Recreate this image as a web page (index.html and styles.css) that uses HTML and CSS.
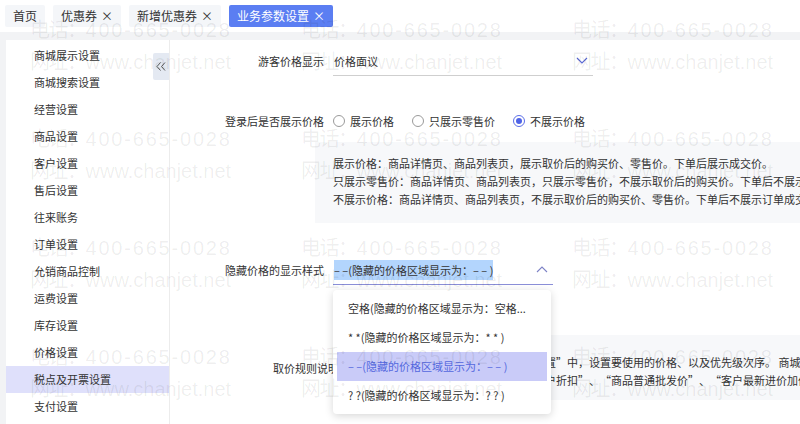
FILE: index.html
```html
<!DOCTYPE html>
<html lang="zh-CN">
<head>
<meta charset="utf-8">
<title>业务参数设置</title>
<link rel="stylesheet" href="styles.css">
</head>
<body>
<div class="app">
  <nav class="tabs">
    <span class="tab">首页</span>
    <span class="tab">优惠券<span class="x">×</span></span>
    <span class="tab">新增优惠券<span class="x">×</span></span>
    <span class="tab active">业务参数设置<span class="x">×</span></span>
  </nav>
  <div class="frame">
    <aside class="sidebar">
      <ul class="menu">
        <li>商城展示设置</li>
        <li>商城搜索设置</li>
        <li>经营设置</li>
        <li>商品设置</li>
        <li>客户设置</li>
        <li>售后设置</li>
        <li>往来账务</li>
        <li>订单设置</li>
        <li>允销商品控制</li>
        <li>运费设置</li>
        <li>库存设置</li>
        <li>价格设置</li>
        <li class="current">税点及开票设置</li>
        <li>支付设置</li>
      </ul>
      <button class="collapse" type="button" aria-label="收起">
        <svg width="10" height="9" viewBox="0 0 10 9"><polyline points="4.5,0.5 1,4.5 4.5,8.5" fill="none" stroke="#555" stroke-width="1"/><polyline points="9,0.5 5.5,4.5 9,8.5" fill="none" stroke="#555" stroke-width="1"/></svg>
      </button>
    </aside>
    <main class="content">
      <div class="row row-guest">
        <span class="label">游客价格显示</span>
        <div class="select select-wide">
          <span class="value">价格面议</span>
          <svg class="chev" width="12" height="7" viewBox="0 0 12 7"><polyline points="1,1 6,6 11,1" fill="none" stroke="#5a68d4" stroke-width="1.1"/></svg>
        </div>
      </div>
      <div class="row row-login">
        <span class="label">登录后是否展示价格</span>
        <div class="radios">
          <span class="radio"><i class="dot"></i>展示价格</span>
          <span class="radio"><i class="dot"></i>只展示零售价</span>
          <span class="radio checked"><i class="dot"></i>不展示价格</span>
        </div>
      </div>
      <div class="info">
        <p>展示价格：商品详情页、商品列表页，展示取价后的购买价、零售价。下单后展示成交价。</p>
        <p>只展示零售价：商品详情页、商品列表页，只展示零售价，不展示取价后的购买价。下单后不展示订单成交价。</p>
        <p>不展示价格：商品详情页、商品列表页，不展示取价后的购买价、零售价。下单后不展示订单成交价。</p>
      </div>
      <div class="row row-style">
        <span class="label">隐藏价格的显示样式</span>
        <div class="select select-focus">
          <span class="value"><span class="sel">– –(隐藏的价格区域显示为：– – )</span></span>
          <svg class="chev" width="12" height="7" viewBox="0 0 12 7"><polyline points="1,6 6,1 11,6" fill="none" stroke="#7d83c6" stroke-width="1.1"/></svg>
          <ul class="dropdown">
            <li>空格(隐藏的价格区域显示为：空格...</li>
            <li>* *(隐藏的价格区域显示为：* * )</li>
            <li class="hover">– –(隐藏的价格区域显示为：– – )</li>
            <li>? ?(隐藏的价格区域显示为：? ? )</li>
          </ul>
        </div>
      </div>
      <div class="rule">
        <span class="rule-label">取价规则说明</span>
        <div class="rule-box">
          <p>商城取价规则在“商城设置－价格设置”中，设置要使用的价格、以及优先级次序。 商城中使用的价格包括“商品零售价”</p>
          <p>可选价格有：“商品零售价”、“客户折扣”、“商品普通批发价”、“客户最新进价加价”7种价格方式</p>
        </div>
      </div>
    </main>
  </div>
  <div class="watermark" aria-hidden="true">
    <div class="wm"><p>电话：<span class="num">400-665-0028</span></p><p>网址：<span class="url">www.chanjet.net</span></p></div>
    <div class="wm"><p>电话：<span class="num">400-665-0028</span></p><p>网址：<span class="url">www.chanjet.net</span></p></div>
    <div class="wm"><p>电话：<span class="num">400-665-0028</span></p><p>网址：<span class="url">www.chanjet.net</span></p></div>
    <div class="wm"><p>电话：<span class="num">400-665-0028</span></p><p>网址：<span class="url">www.chanjet.net</span></p></div>
    <div class="wm"><p>电话：<span class="num">400-665-0028</span></p><p>网址：<span class="url">www.chanjet.net</span></p></div>
    <div class="wm"><p>电话：<span class="num">400-665-0028</span></p><p>网址：<span class="url">www.chanjet.net</span></p></div>
    <div class="wm"><p>电话：<span class="num">400-665-0028</span></p><p>网址：<span class="url">www.chanjet.net</span></p></div>
    <div class="wm"><p>电话：<span class="num">400-665-0028</span></p><p>网址：<span class="url">www.chanjet.net</span></p></div>
    <div class="wm"><p>电话：<span class="num">400-665-0028</span></p><p>网址：<span class="url">www.chanjet.net</span></p></div>
    <div class="wm"><p>电话：<span class="num">400-665-0028</span></p><p>网址：<span class="url">www.chanjet.net</span></p></div>
    <div class="wm"><p>电话：<span class="num">400-665-0028</span></p><p>网址：<span class="url">www.chanjet.net</span></p></div>
    <div class="wm"><p>电话：<span class="num">400-665-0028</span></p><p>网址：<span class="url">www.chanjet.net</span></p></div>
  </div>
</div>
</body>
</html>
```
FILE: styles.css
```css
html, body {
  margin: 0;
  padding: 0;
  overflow: hidden;
  background: #fff;
}
body {
  font-family: "Noto Sans CJK SC", "Noto Sans", sans-serif;
  color: #333;
  font-size: 11px;
  text-spacing-trim: space-all;
}
p, ul { margin: 0; padding: 0; }
ul { list-style: none; }

.app {
  position: relative;
  width: 800px;
  height: 424px;
  overflow: hidden;
}

/* tabs */
.tabs {
  height: 32px;
  box-sizing: border-box;
  display: flex;
  align-items: flex-start;
  gap: 8px;
  padding: 5px 0 0 5px;
  background: #fff;
}
.tab {
  height: 22px;
  line-height: 22px;
  padding: 0 8px;
  font-size: 12px;
  background: #f4f6f9;
  color: #333;
  border-radius: 2px;
  white-space: nowrap;
}
.tab .x {
  margin-left: 4px;
  font-size: 12px;
}
.tab.active {
  background: #5b7ef2;
  color: #fff;
}

/* frame */
.frame {
  display: flex;
  height: 392px;
  box-sizing: border-box;
  padding: 8px 0 0 6px;
  background: #f2f3f5;
}
.sidebar {
  position: relative;
  width: 163px;
  flex: none;
  background: #fff;
  border-right: 1px solid #ececec;
}
.menu {
  padding-top: 2px;
}
.menu li {
  height: 27px;
  line-height: 27px;
  padding-left: 28px;
  white-space: nowrap;
}
.menu li.current {
  background: #dfe0fb;
}
.collapse {
  position: absolute;
  right: 0;
  top: 13px;
  width: 16px;
  height: 27px;
  padding: 0;
  border: 0;
  border-radius: 2px 0 0 2px;
  background: #e4e9f2;
  display: flex;
  align-items: center;
  justify-content: center;
}

/* content */
.content {
  flex: 1;
  min-width: 0;
  background: #fff;
  padding-top: 6px;
  overflow: hidden;
}
.row {
  display: grid;
  grid-template-columns: 154px auto;
  column-gap: 9px;
  align-items: center;
  justify-content: start;
}
.label {
  text-align: right;
  white-space: nowrap;
}
.select {
  position: relative;
  height: 30px;
  box-sizing: border-box;
  border-bottom: 1px solid #cfcfcf;
  display: flex;
  align-items: center;
  justify-content: space-between;
  padding: 0 5px 0 1px;
}
.select-wide { width: 260px; }
.select-focus {
  width: 220px;
  border-bottom-color: #8b8fd8;
}
.chev { display: block; }
.sel {
  background: #b3d5fd;
  padding: 2px 0;
}

.row-login {
  margin-top: 35px;
  height: 20px;
}
.radios {
  display: flex;
  gap: 18px;
}
.radio {
  display: flex;
  align-items: center;
  gap: 5px;
  white-space: nowrap;
}
.dot {
  width: 12px;
  height: 12px;
  box-sizing: border-box;
  border: 1px solid #9a9a9a;
  border-radius: 50%;
  background: #fff;
  position: relative;
}
.radio.checked .dot {
  border-color: #5b6ee8;
}
.radio.checked .dot::after {
  content: "";
  position: absolute;
  left: 2px;
  top: 2px;
  width: 6px;
  height: 6px;
  border-radius: 50%;
  background: #4f63e6;
}

.info {
  margin: 11px 0 0 145px;
  padding: 12px 18px 15px;
  background: #f7f8fa;
  line-height: 18px;
  white-space: nowrap;
}

.row-style { margin-top: 32px; }
.dropdown {
  position: absolute;
  top: 35px;
  left: 0;
  width: 218px;
  box-sizing: border-box;
  padding: 4px 4px;
  background: #fff;
  border-radius: 4px;
  box-shadow: 0 2px 9px rgba(0, 0, 0, 0.16);
  z-index: 2;
}
.dropdown li {
  height: 29px;
  line-height: 29px;
  padding-left: 11px;
  white-space: nowrap;
  color: #333;
}
.dropdown li.hover {
  background: #c9cbf8;
  color: #5468de;
}

.rule {
  margin-top: 50px;
  display: flex;
  align-items: center;
  padding-left: 103px;
}
.rule-label { white-space: nowrap; flex: none; }
.rule-box {
  flex: none;
  margin-left: 12px;
  padding: 18px 18px 11px;
  background: #f7f8fa;
  line-height: 18px;
  white-space: nowrap;
}

/* watermark */
.watermark {
  position: absolute;
  inset: 0;
  pointer-events: none;
  display: grid;
  grid-template-columns: repeat(3, 271px);
  grid-auto-rows: 109px;
  padding: 14px 0 0 30px;
  color: rgba(0, 0, 0, 0.07);
  font-family: "Liberation Sans", "Noto Sans CJK SC", sans-serif;
  font-size: 20px;
  line-height: 32px;
  z-index: 5;
}
.wm p { white-space: nowrap; letter-spacing: -1.5px; }
.wm .num { letter-spacing: 1.8px; }
.wm .url { letter-spacing: 0; }
```
